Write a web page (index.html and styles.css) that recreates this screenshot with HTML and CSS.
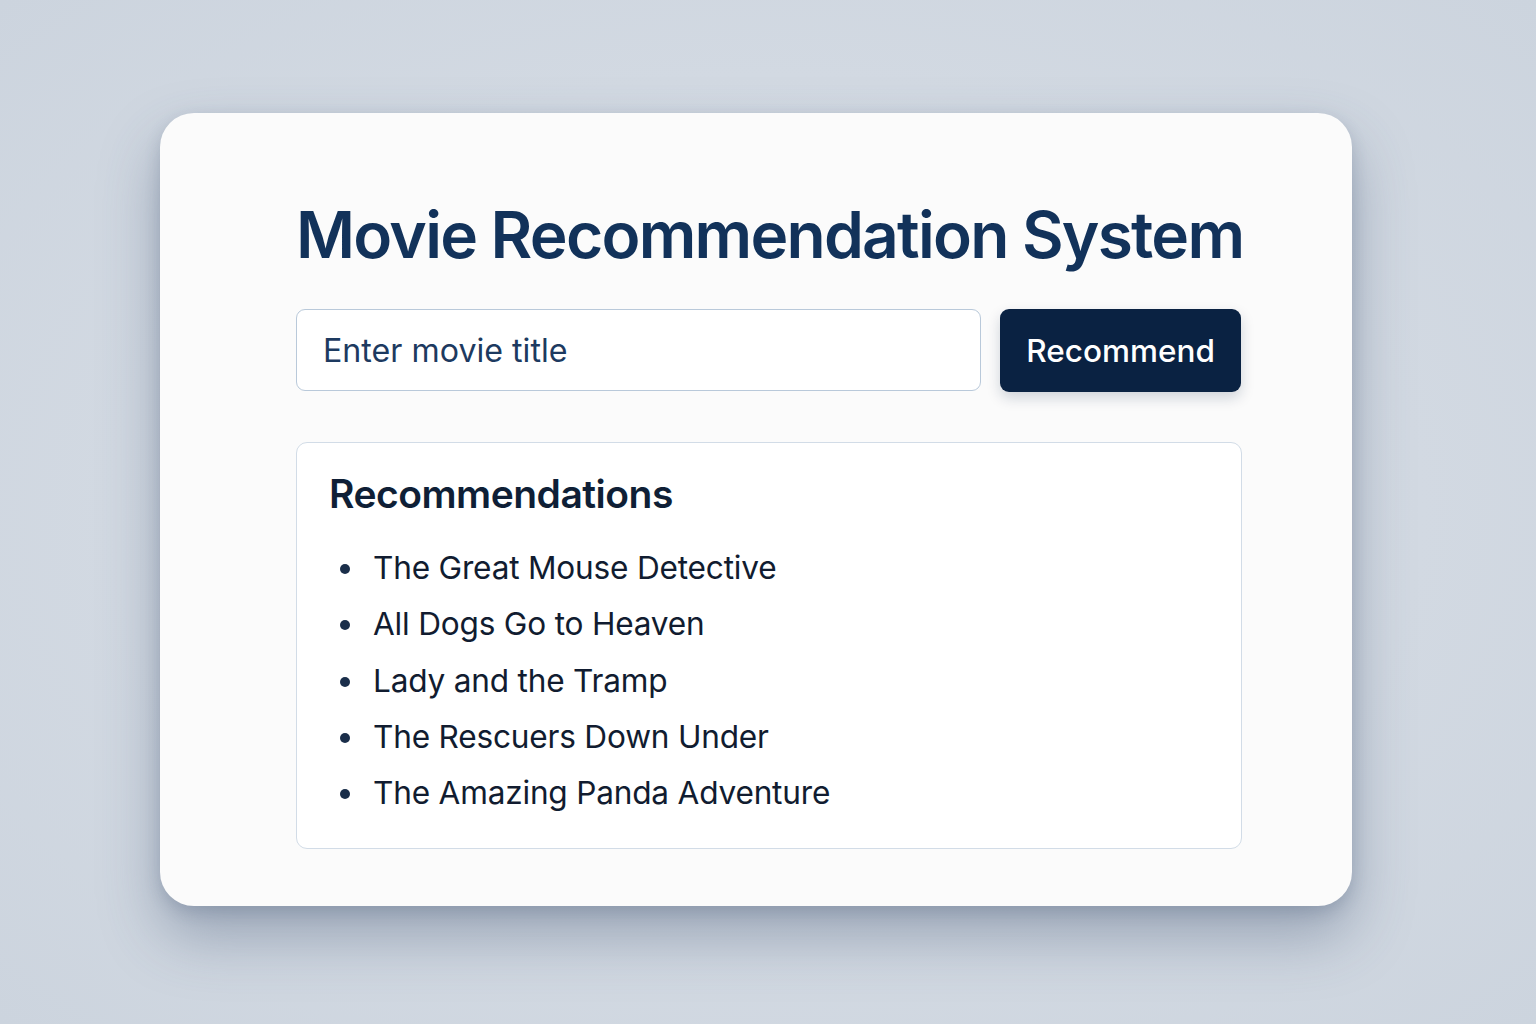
FILE: index.html
```html
<!DOCTYPE html>
<html lang="en">
<head>
<meta charset="utf-8">
<title>Movie Recommendation System</title>
<link rel="stylesheet" href="styles.css">
</head>
<body>
<main class="stage">
  <section class="card">
    <h1 class="title">Movie Recommendation System</h1>
    <form class="search">
      <input class="search-input" type="text" placeholder="Enter movie title">
      <button class="search-btn" type="button">Recommend</button>
    </form>
    <div class="results">
      <h2 class="results-title">Recommendations</h2>
      <ul class="results-list">
        <li>The Great Mouse Detective</li>
        <li>All Dogs Go to Heaven</li>
        <li>Lady and the Tramp</li>
        <li>The Rescuers Down Under</li>
        <li>The Amazing Panda Adventure</li>
      </ul>
    </div>
  </section>
</main>
</body>
</html>
```
FILE: styles.css
```css
* { box-sizing: border-box; }
html, body { margin: 0; padding: 0; }
body {
  width: 1536px;
  height: 1024px;
  overflow: hidden;
  background: radial-gradient(ellipse at 50% 50%, #dde3ea 0%, #d2d9e2 60%, #ccd4de 100%);
  font-family: Inter, "Noto Sans", sans-serif;
}
.stage {
  display: flex;
  justify-content: flex-start;
  padding-top: 113px;
  padding-left: 160px;
}
.card {
  width: 1192px;
  height: 793px;
  background: #fbfbfb;
  border-radius: 34px;
  box-shadow: 0 30px 60px rgba(60, 80, 110, 0.38), 0 6px 16px rgba(60, 80, 110, 0.2);
  padding: 82px 111px 0 136px;
}
.title {
  margin: 0;
  font-size: 64px;
  font-weight: 600;
  color: #12325a;
  letter-spacing: -1.75px;
  line-height: 80px;
  white-space: nowrap;
}
.search {
  display: flex;
  gap: 19px;
  margin-top: 34px;
}
.search-input {
  width: 686px;
  height: 82px;
  border: 1.5px solid #b9c9da;
  border-radius: 9px;
  background: #fff;
  padding: 0 26px;
  font-family: inherit;
  font-size: 32.2px;
  color: #1d3a60;
  outline: none;
}
.search-input::placeholder { color: #1d3a60; opacity: 1; }
.search-btn {
  width: 241px;
  height: 83px;
  border: none;
  border-radius: 9px;
  background: #0a2242;
  color: #fff;
  font-family: inherit;
  font-size: 31.5px;
  font-weight: 500;
  box-shadow: 0 6px 14px rgba(10, 34, 66, 0.18);
}
.results {
  margin-top: 50px;
  width: 946px;
  height: 407px;
  background: #fff;
  border: 1.5px solid #d2dce7;
  border-radius: 11px;
  padding: 26px 32px;
}
.results-title {
  margin: 0;
  font-size: 39px;
  font-weight: 600;
  color: #0f1f36;
  letter-spacing: -0.5px;
  line-height: 50px;
}
.results-list {
  margin: 21px 0 0;
  padding: 0;
  list-style: none;
  font-size: 31.6px;
  color: #111c30;
  line-height: 56.25px;
  letter-spacing: -0.2px;
}
.results-list li {
  display: flex;
  align-items: center;
}
.results-list li::before {
  content: "";
  flex: none;
  width: 10px;
  height: 10px;
  border-radius: 50%;
  background: #1a2e4a;
  margin: 2px 23px 0 11px;
}
```
